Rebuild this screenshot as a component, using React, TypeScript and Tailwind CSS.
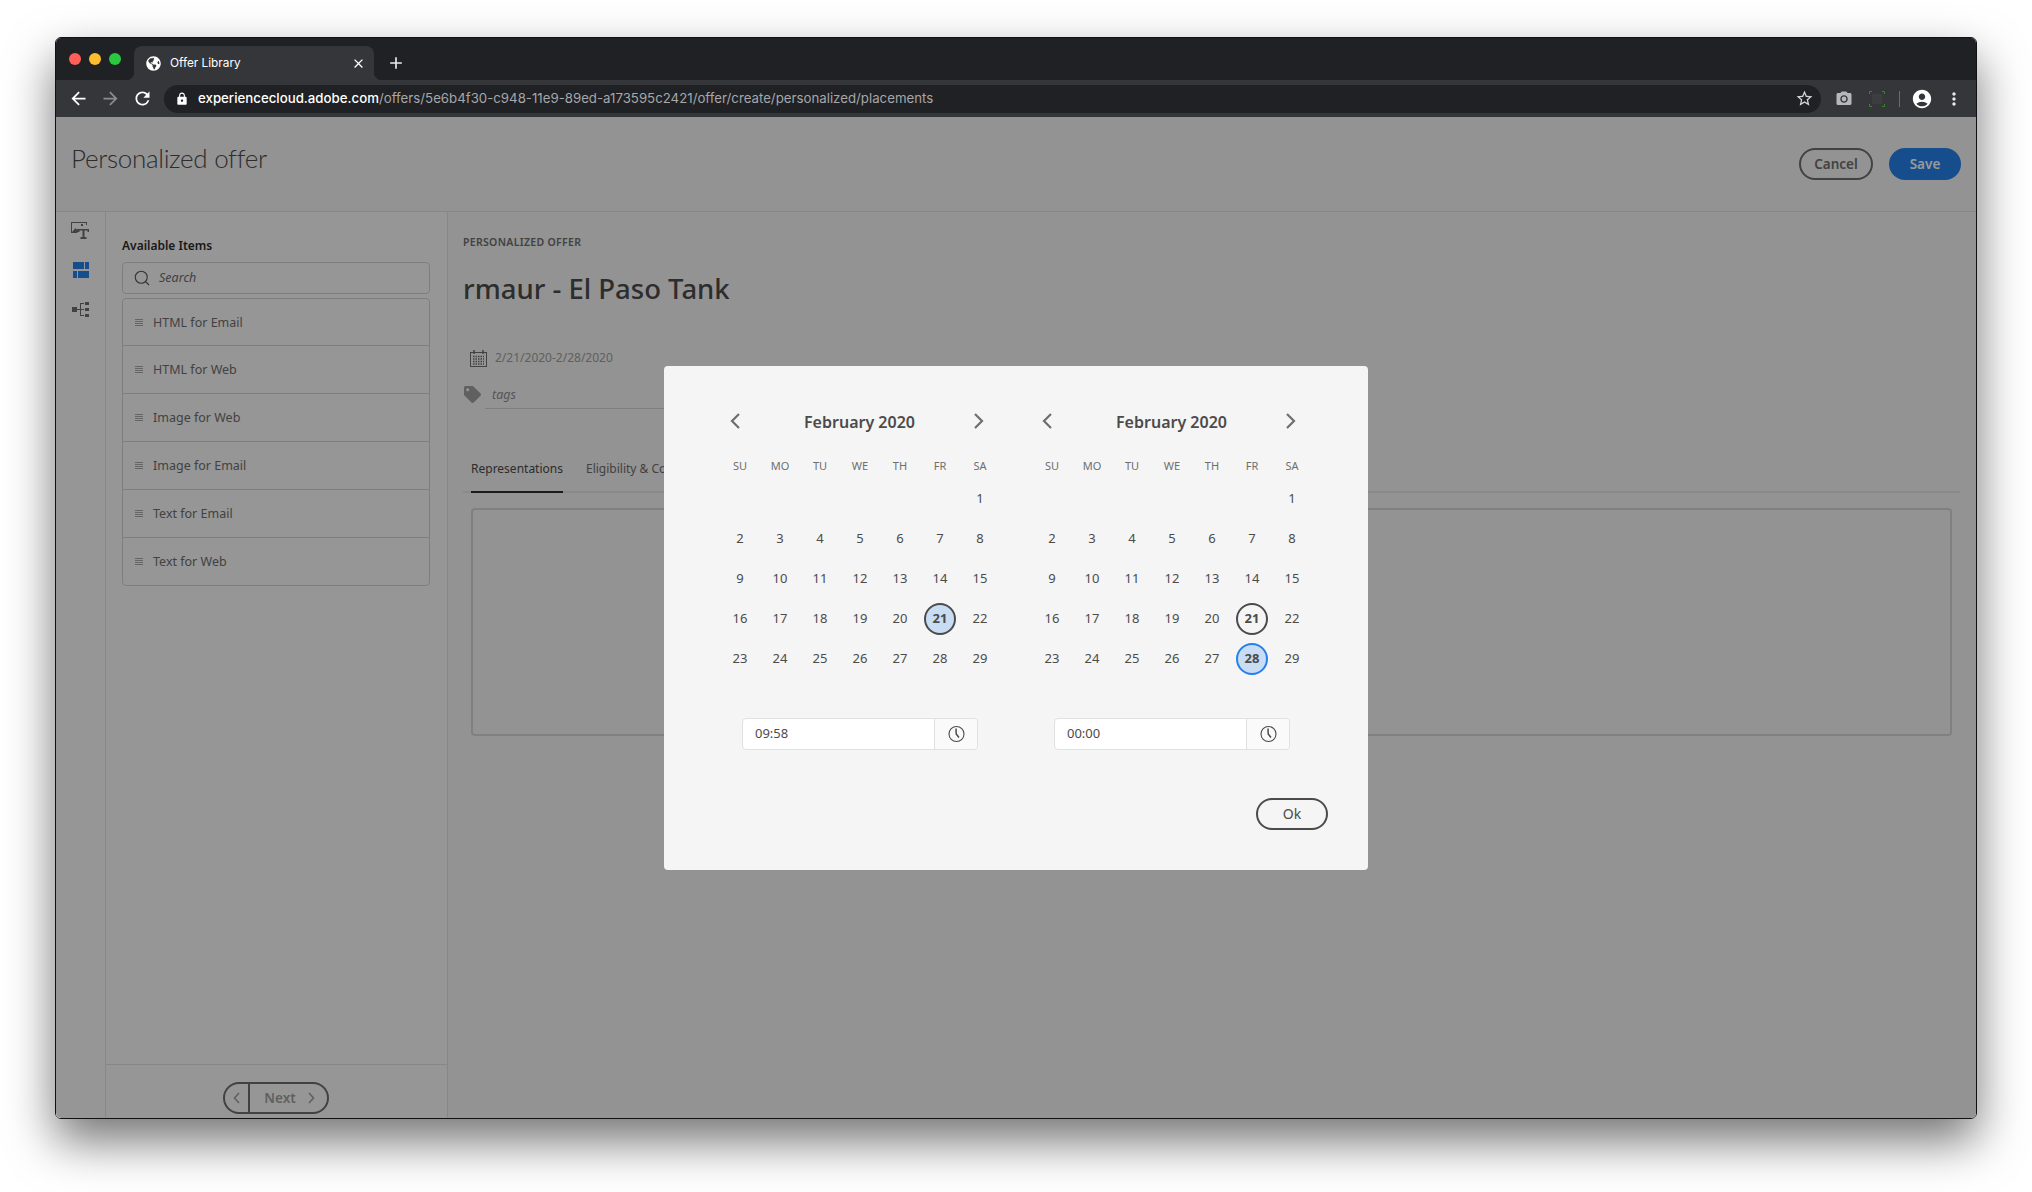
import React from "react";
import { FaGlobeAmericas, FaTag } from "react-icons/fa";
import { MdArrowBack, MdArrowForward, MdRefresh, MdLock, MdStarBorder, MdAccountCircle, MdMoreVert, MdCameraAlt, MdClose, MdAdd } from "react-icons/md";
import { Search } from "lucide-react";

const Chevron = ({ dir, className }: { dir: "l" | "r"; className?: string }) => (
  <svg width="12" height="18" viewBox="0 0 12 18" className={className} fill="none" stroke="currentColor" strokeWidth="2.2">
    <path d={dir === "l" ? "M10 2 L3 9 L10 16" : "M2 2 L9 9 L2 16"} />
  </svg>
);

const Clock = () => (
  <svg width="17" height="18" viewBox="0 0 17 18" fill="none" stroke="#4b4b4b">
    <circle cx="8.5" cy="9" r="7.5" strokeWidth="1.1" />
    <path d="M8 3.5 L8.2 9 L11 12.5" strokeWidth="1.5" />
  </svg>
);

const Month = ({ start, end, first }: { start: number; end: number; first?: boolean }) => {
  const cells: (number | null)[] = [null, null, null, null, null, null];
  for (let d = 1; d <= 29; d++) cells.push(d);
  return (
    <div className="w-[280px]">
      <div className="flex h-[31px] items-center justify-between pl-[9px] pr-[15px]">
        <Chevron dir="l" className="text-[#6e6e6e]" />
        <span className="ml-[5px] pt-px text-[16px] font-semibold text-[#4b4b4b]">February 2020</span>
        <Chevron dir="r" className="text-[#6e6e6e]" />
      </div>
      <div className="mt-[18px] grid h-6 grid-cols-7 items-center text-center text-[11px] text-[#6e6e6e]">
        {["SU", "MO", "TU", "WE", "TH", "FR", "SA"].map((d) => (
          <span key={d}>{d}</span>
        ))}
      </div>
      <div className="grid grid-cols-7 text-[13px] text-[#4b4b4b]">
        {cells.map((d, i) => {
          let cls = "";
          if (d === start && first) cls = "border-2 border-[#4b4b4b] bg-[#c8dcf3] font-bold";
          else if (d === start) cls = "border-2 border-[#4b4b4b] font-bold";
          else if (d === end && !first) cls = "border-2 border-[#2680eb] bg-[#c8dcf3] font-bold";
          return (
            <div key={i} className="flex h-10 items-center justify-center">
              {d !== null && <span className={`flex h-8 w-8 items-center justify-center rounded-full ${cls}`}>{d}</span>}
            </div>
          );
        })}
      </div>
      <div className="mx-[22px] mt-[39px] flex h-8 rounded border border-[#e1e1e1] bg-white">
        <div className="flex flex-1 items-center pl-3 text-[13px] text-[#4b4b4b]">{first ? "09:58" : "00:00"}</div>
        <div className="flex w-[43px] items-center justify-center rounded-r border-l border-[#e1e1e1] bg-[#fafafa]">
          <Clock />
        </div>
      </div>
    </div>
  );
};

const items = ["HTML for Email", "HTML for Web", "Image for Web", "Image for Email", "Text for Email", "Text for Web"];

export default function App() {
  return (
    <div className="h-[1192px] w-full overflow-hidden bg-white pl-[55px] pt-[37px] [font-family:'Noto_Sans',sans-serif]">
      <div className="flex h-[1082px] w-[1922px] flex-col overflow-hidden rounded-[6px] border border-[#111] shadow-[0_22px_48px_rgba(0,0,0,0.55)]">
        {/* tab strip */}
        <div className="flex h-[42px] items-end bg-[#202124] pl-[13px] [font-family:Inter,sans-serif]">
          <div className="mb-[15px] flex w-[65px] gap-2">
            <span className="h-3 w-3 rounded-full bg-[#ff5f57]" />
            <span className="h-3 w-3 rounded-full bg-[#febc2e]" />
            <span className="h-3 w-3 rounded-full bg-[#28c840]" />
          </div>
          <div className="relative flex h-[34px] w-[240px] items-center rounded-t-lg bg-[#35363a] pl-[12px] pr-[8px] text-white">
            <span className="absolute bottom-0 left-[-8px] h-2 w-2 bg-[radial-gradient(circle_at_0_0,#202124_8px,#35363a_8.5px)]" />
            <span className="absolute bottom-0 right-[-8px] h-2 w-2 bg-[radial-gradient(circle_at_100%_0,#202124_8px,#35363a_8.5px)]" />
            <FaGlobeAmericas className="h-[15px] w-[15px] shrink-0" />
            <span className="ml-[9px] flex-1 pt-px text-[11.8px]">Offer Library</span>
            <MdClose className="h-[15px] w-[15px]" />
          </div>
          <div className="flex h-[34px] w-[44px] items-center justify-center">
            <MdAdd className="h-5 w-5 text-[#e8eaed]" />
          </div>
        </div>
        {/* toolbar */}
        <div className="flex h-[37px] items-center bg-[#35363a] [font-family:Inter,sans-serif]">
          <div className="flex w-[108px] items-center justify-between pl-[12px] pr-[11px]">
            <MdArrowBack className="h-[21px] w-[21px] text-white" />
            <MdArrowForward className="h-[21px] w-[21px] text-[#8b8c8e]" />
            <MdRefresh className="h-[21px] w-[21px] text-white" />
          </div>
          <div className="flex h-7 w-[1657px] items-center rounded-full bg-[#202124] pl-[11px] pr-[7px] text-[13.25px]">
            <MdLock className="h-[14px] w-[14px] text-white" />
            <div className="ml-[9px] flex-1 whitespace-nowrap">
              <span className="font-medium text-white">experiencecloud.adobe.com</span>
              <span className="text-[#a5a7aa]">/offers/5e6b4f30-c948-11e9-89ed-a173595c2421/offer/create/personalized/placements</span>
            </div>
            <MdStarBorder className="h-[19px] w-[19px] text-[#d5d6d7]" />
          </div>
          <div className="flex flex-1 items-center pl-[14px]">
            <MdCameraAlt className="h-[18px] w-[18px] text-[#b6b7b9]" />
            <svg width="16" height="16" viewBox="0 0 16 16" className="ml-[16px]" fill="none" stroke="#2f8a1e">
              <rect x="3" y="3" width="10" height="10" fill="#3c3d41" stroke="none" />
              <path d="M.5 3V.5H3M13 .5h2.500V3M15.500 13v2.500H13M3 15.500H.5V13" />
            </svg>
            <span className="ml-[14px] h-4 w-px bg-[#6a6b6e]" />
            <MdAccountCircle className="ml-[11px] h-[22px] w-[22px] text-white" />
            <MdMoreVert className="ml-[11px] h-[20px] w-[20px] text-[#e8eaed]" />
          </div>
        </div>
        {/* page */}
        <div className="relative flex flex-1 flex-col bg-[#f5f5f5]">
          <header className="flex h-[95px] items-start justify-between border-b border-[#e1e1e1] pl-[15px] pr-[15px]">
            <h1 className="pt-[23px] text-[26px] font-light leading-9 tracking-[-0.3px] text-[#4b4b4b] [font-family:Lato,sans-serif]">Personalized offer</h1>
            <div className="flex gap-4 pt-[31px]">
              <button className="h-8 w-[74px] rounded-full border-2 border-[#6e6e6e] text-[13.5px] font-semibold text-[#6e6e6e]">Cancel</button>
              <button className="h-8 w-[72px] rounded-full bg-[#2680eb] text-[13.5px] font-semibold text-white">Save</button>
            </div>
          </header>
          <div className="flex flex-1">
            <nav className="flex w-[50px] flex-col items-center border-r border-[#e1e1e1] bg-[#fafafa] pt-[10px]">
              <svg width="19" height="18" viewBox="0 0 19 18" fill="#6e6e6e">
                <path d="M0 0h16v3h-1V1H1v9h5v1H0z" />
                <path d="M1 10l3.500-4 2 2.500V11H1zM10 2h2v2h-2zM6 7h12v3h-1.500V8.500h-3V15h2v2h-6v-2h2V8.500h-3V10H6z" />
              </svg>
              <svg width="16" height="16" viewBox="0 0 16 16" fill="#2680eb" className="mt-[22px]">
                <path d="M0 0h11v7H0zM12 0h4v7h-4zM0 9h4v7H0zM5 9h11v7H5z" />
              </svg>
              <svg width="17" height="15" viewBox="0 0 17 15" fill="#6e6e6e" className="mt-[24px]">
                <path d="M0 5h5v5H0zM13 0h4v3h-4zM13 6h4v3h-4zM13 12h4v3h-4zM5 7h3V1h4v1H9v5h3v1H9v5h3v1H8V8H5z" />
              </svg>
            </nav>
            <aside className="flex w-[342px] flex-col border-r border-[#e1e1e1] bg-[#fafafa]">
              <div className="h-[853px] border-b border-[#e1e1e1] px-4 pt-[24px]">
                <div className="text-[12px] font-semibold leading-5 text-[#2c2c2c]">Available Items</div>
                <div className="mt-[6px] flex h-8 w-[308px] items-center rounded border border-[#d3d3d3] pl-[10px] text-[#5a5a5a]">
                  <Search className="h-[18px] w-[18px]" strokeWidth={1.5} />
                  <span className="ml-[8px] text-[12.5px] italic text-[#6e6e6e]">Search</span>
                </div>
                <ul className="mt-1 w-[308px] rounded border border-[#d3d3d3] text-[12.5px] text-[#6e6e6e]">
                  {items.map((t) => (
                    <li key={t} className="flex h-[48px] items-center border-b border-[#d3d3d3] pl-[12px] first:h-[47px] last:h-[47px] last:border-b-0">
                      <span className="flex w-2 flex-col gap-px">
                        <i className="h-px bg-[#a8a8a8]" />
                        <i className="h-px bg-[#a8a8a8]" />
                        <i className="h-px bg-[#a8a8a8]" />
                        <i className="h-px bg-[#a8a8a8]" />
                      </span>
                      <span className="ml-[10px] pt-[2px]">{t}</span>
                    </li>
                  ))}
                </ul>
              </div>
              <div className="flex flex-1 justify-center pt-[17px] pr-[1px]">
                <div className="flex h-8 w-[106px] rounded-full border-2 border-[#6e6e6e] text-[#a0a0a0]">
                  <span className="flex w-[25px] items-center justify-center border-r-2 border-[#6e6e6e]">
                    <svg width="7" height="12" viewBox="0 0 7 12" fill="none" stroke="currentColor" strokeWidth="1.6"><path d="M6 1 L1.500 6 L6 11" /></svg>
                  </span>
                  <span className="flex flex-1 items-center justify-center gap-[12px] pl-[2px] text-[13.5px] font-semibold">
                    Next
                    <svg width="7" height="12" viewBox="0 0 7 12" fill="none" stroke="currentColor" strokeWidth="1.6"><path d="M1 1 L5.500 6 L1 11" /></svg>
                  </span>
                </div>
              </div>
            </aside>
            <main className="flex-1 pl-[15px] pr-[16px] pt-[23px]">
              <div className="text-[10.5px] font-semibold uppercase leading-[14px] tracking-[0.03em] text-[#6e6e6e]">Personalized offer</div>
              <div className="mt-[22px] text-[27.5px] font-medium leading-9 text-[#4b4b4b]">rmaur - El Paso Tank</div>
              <div className="ml-[7px] mt-[41px] flex h-5 items-center text-[12px] text-[#a0a0a0]">
                <svg width="17" height="17" viewBox="0 0 17 17" fill="none" stroke="#6e6e6e">
                  <rect x=".5" y="2.5" width="16" height="14" />
                  <path d="M4 0v4M13 0v4" strokeWidth="1.500" />
                  <path d="M3 6.500h11M3 9h11M3 11.500h11M3 14h11" strokeDasharray="1.500 1" strokeWidth="1.300" />
                </svg>
                <span className="ml-2">2/21/2020-2/28/2020</span>
              </div>
              <div className="mt-[13px] flex h-[28px] items-start pl-px">
                <FaTag className="mt-[5px] h-[17px] w-[17px] text-[#a0a0a0]" />
                <div className="ml-[4px] h-[28px] w-[500px] border-b border-[#d3d3d3] pl-[7px] text-[12.5px] italic leading-[27px] text-[#8e8e8e]">tags</div>
              </div>
              <div className="mt-[46px] flex h-[38px] border-b-2 border-[#e6e6e6] pl-2 text-[12px] text-[#6e6e6e]">
                <div className="flex h-[38px] w-[92px] items-center justify-center border-b-2 border-[#2c2c2c] pb-[8px] text-[#4b4b4b]">Representations</div>
                <div className="ml-[23px] flex h-[36px] items-center pb-[8px]">Eligibility &amp; Constraints</div>
              </div>
              <div className="ml-2 mr-2 mt-[15px] h-[228px] rounded border-2 border-[#d5d5d5]" />
            </main>
          </div>
          {/* dialog */}
          <div className="absolute inset-0 flex items-center justify-center bg-black/40">
            <div className="flex h-[504px] w-[704px] flex-col rounded bg-[#f5f5f5] px-10 pt-10">
              <div className="flex gap-8 px-4">
                <Month start={21} end={21} first />
                <Month start={21} end={28} />
              </div>
              <button className="mt-12 h-8 w-[72px] self-end rounded-full border-2 border-[#4b4b4b] text-[14px] text-[#4b4b4b]">Ok</button>
            </div>
          </div>
        </div>
      </div>
    </div>
  );
}
